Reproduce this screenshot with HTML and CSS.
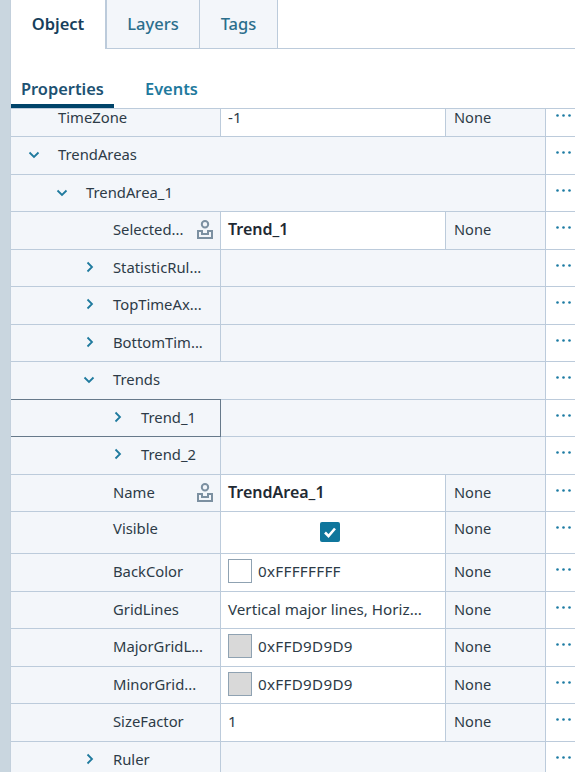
FILE: index.html
```html
<!DOCTYPE html>
<html lang="en">
<head>
    <meta charset="UTF-8">
    <title>Properties</title>
    <link rel="stylesheet" href="styles.css">
</head>
<body>
    <svg class="defs" width="0" height="0">
        <symbol id="dots" viewBox="0 0 15 3"><circle cx="1.500" cy="1.500" r="1.300"/><circle cx="7.500" cy="1.500" r="1.300"/><circle cx="13.500" cy="1.500" r="1.300"/></symbol>
        <symbol id="down" viewBox="0 0 12 8"><path d="M1.500 1.500 6 6l4.500-4.500" fill="none" stroke-width="1.800"/></symbol>
        <symbol id="right" viewBox="0 0 8 12"><path d="M1.500 1.500 6 6l-4.500 4.500" fill="none" stroke-width="1.800"/></symbol>
        <symbol id="person" viewBox="0 0 16 19"><circle cx="8" cy="4.200" r="3.200" fill="none" stroke-width="2"/><path d="M1 18v-7h4v3h6v-3h4v7z" fill="none" stroke-width="2"/></symbol>
    </svg>

    <div class="panel">
        <!-- Top tabs -->
        <div class="tabs">
            <div class="tab tab-active">Object</div>
            <div class="tab">Layers</div>
            <div class="tab">Tags</div>
        </div>
        <div class="subtabs">
            <div class="subtab subtab-active">Properties</div>
            <div class="subtab">Events</div>
        </div>

        <!-- Property grid -->
        <div class="grid">
            <div class="grid-inner">
                <div class="row">
                    <div class="name lvl-0"><span class="twist"></span><span class="label">TimeZone</span></div>
                    <div class="value">-1</div><div class="dyn">None</div><div class="more"><svg><use href="#dots"/></svg></div>
                </div>
                <div class="row row-group">
                    <div class="name lvl-0"><span class="twist"><svg class="chev-down"><use href="#down"/></svg></span><span class="label">TrendAreas</span></div>
                    <div class="more"><svg><use href="#dots"/></svg></div>
                </div>
                <div class="row row-group">
                    <div class="name lvl-1"><span class="twist"><svg class="chev-down"><use href="#down"/></svg></span><span class="label">TrendArea_1</span></div>
                    <div class="more"><svg><use href="#dots"/></svg></div>
                </div>
                <div class="row">
                    <div class="name lvl-2"><span class="twist"></span><span class="label label-short">Selected...</span><svg class="person"><use href="#person"/></svg></div>
                    <div class="value value-bold">Trend_1</div><div class="dyn">None</div><div class="more"><svg><use href="#dots"/></svg></div>
                </div>
                <div class="row row-empty">
                    <div class="name lvl-2"><span class="twist"><svg class="chev-right"><use href="#right"/></svg></span><span class="label">StatisticRul...</span></div>
                    <div class="blank"></div><div class="more"><svg><use href="#dots"/></svg></div>
                </div>
                <div class="row row-empty">
                    <div class="name lvl-2"><span class="twist"><svg class="chev-right"><use href="#right"/></svg></span><span class="label">TopTimeAx...</span></div>
                    <div class="blank"></div><div class="more"><svg><use href="#dots"/></svg></div>
                </div>
                <div class="row row-empty">
                    <div class="name lvl-2"><span class="twist"><svg class="chev-right"><use href="#right"/></svg></span><span class="label">BottomTim...</span></div>
                    <div class="blank"></div><div class="more"><svg><use href="#dots"/></svg></div>
                </div>
                <div class="row row-group">
                    <div class="name lvl-2"><span class="twist"><svg class="chev-down"><use href="#down"/></svg></span><span class="label">Trends</span></div>
                    <div class="more"><svg><use href="#dots"/></svg></div>
                </div>
                <div class="row row-empty">
                    <div class="name lvl-3 name-focus"><span class="twist"><svg class="chev-right"><use href="#right"/></svg></span><span class="label">Trend_1</span></div>
                    <div class="blank"></div><div class="more"><svg><use href="#dots"/></svg></div>
                </div>
                <div class="row row-empty">
                    <div class="name lvl-3"><span class="twist"><svg class="chev-right"><use href="#right"/></svg></span><span class="label">Trend_2</span></div>
                    <div class="blank"></div><div class="more"><svg><use href="#dots"/></svg></div>
                </div>
                <div class="row">
                    <div class="name lvl-2"><span class="twist"></span><span class="label label-short">Name</span><svg class="person"><use href="#person"/></svg></div>
                    <div class="value value-bold">TrendArea_1</div><div class="dyn">None</div><div class="more"><svg><use href="#dots"/></svg></div>
                </div>
                <div class="row row-tall">
                    <div class="name lvl-2"><span class="twist"></span><span class="label">Visible</span></div>
                    <div class="value value-center"><span class="check"><svg viewBox="0 0 20 20"><path d="M5 10.500 8.500 14 15 6.500" fill="none" stroke="#fff" stroke-width="2.600"/></svg></span></div>
                    <div class="dyn">None</div><div class="more"><svg><use href="#dots"/></svg></div>
                </div>
                <div class="row">
                    <div class="name lvl-2"><span class="twist"></span><span class="label">BackColor</span></div>
                    <div class="value"><span class="swatch swatch-white"></span><span class="hex">0xFFFFFFFF</span></div><div class="dyn">None</div><div class="more"><svg><use href="#dots"/></svg></div>
                </div>
                <div class="row">
                    <div class="name lvl-2"><span class="twist"></span><span class="label">GridLines</span></div>
                    <div class="value">Vertical major lines, Horiz...</div><div class="dyn">None</div><div class="more"><svg><use href="#dots"/></svg></div>
                </div>
                <div class="row">
                    <div class="name lvl-2"><span class="twist"></span><span class="label">MajorGridL...</span></div>
                    <div class="value"><span class="swatch swatch-grey"></span><span class="hex">0xFFD9D9D9</span></div><div class="dyn">None</div><div class="more"><svg><use href="#dots"/></svg></div>
                </div>
                <div class="row">
                    <div class="name lvl-2"><span class="twist"></span><span class="label">MinorGrid...</span></div>
                    <div class="value"><span class="swatch swatch-grey"></span><span class="hex">0xFFD9D9D9</span></div><div class="dyn">None</div><div class="more"><svg><use href="#dots"/></svg></div>
                </div>
                <div class="row">
                    <div class="name lvl-2"><span class="twist"></span><span class="label">SizeFactor</span></div>
                    <div class="value">1</div><div class="dyn">None</div><div class="more"><svg><use href="#dots"/></svg></div>
                </div>
                <div class="row row-empty">
                    <div class="name lvl-2"><span class="twist"><svg class="chev-right"><use href="#right"/></svg></span><span class="label">Ruler</span></div>
                    <div class="blank"></div><div class="more"><svg><use href="#dots"/></svg></div>
                </div>
            </div>
        </div>
    </div>
</body>
</html>
```

FILE: styles.css
```css
/* Page */
html, body {
    height: 100%;
}

body {
    margin: 0;
    background-color: white;
    font-family: 'Noto Sans', sans-serif;
    font-size: 14.6px;
    color: #2d3b47;
    overflow: hidden;
}

.defs {
    position: absolute;
}

.panel {
    height: 772px;
    margin-left: 10px;
    border-left: 1px solid #c3d0dc;
    box-shadow: -10px 0 0 #c9d6df;
    display: flex;
    flex-direction: column;
}

/* Top tabs */
.tabs {
    display: flex;
    height: 49px;
    border-bottom: 1px solid #bccbdb;
    box-sizing: border-box;
    flex-shrink: 0;
}

.tab {
    display: flex;
    align-items: center;
    justify-content: center;
    background-color: #f3f6fa;
    border-right: 1px solid #bccbdb;
    color: #2b6e8c;
    font-size: 16.5px;
    font-weight: 500;
    width: 78px;
    padding-bottom: 2px;
    box-sizing: border-box;
}

.tab:nth-child(2) {
    width: 93px;
}

.tab-active {
    background-color: white;
    color: #173f5c;
    font-weight: 600;
    width: 96px;
    border-right: 2px solid #bccbdb;
    margin-bottom: -1px;
}

/* Sub tabs */
.subtabs {
    display: flex;
    height: 59px;
    align-items: flex-end;
    flex-shrink: 0;
}

.subtab {
    height: 33px;
    padding: 0 10px;
    color: #1f7a9e;
    font-size: 16.4px;
    font-weight: 600;
    margin-left: 21px;
    line-height: 27px;
    box-sizing: border-box;
}

.subtab-active {
    width: 103px;
    margin-left: 0;
    color: #1d5272;
    border-bottom: 4px solid #00446a;
}

/* Property grid */
.grid {
    flex: 1;
    min-height: 0;
    overflow: hidden;
    border-top: 1px solid #bccbdb;
}

.grid-inner {
    margin-top: -9.5px;
}

.row {
    display: grid;
    grid-template-columns: 210px 225px 100px 1fr;
    height: 37.5px;
    box-sizing: border-box;
    border-bottom: 1px solid #bccbdb;
}

.row-tall {
    height: 42px;
}

.row-empty {
    grid-template-columns: 210px 325px 1fr;
}

.row-group {
    grid-template-columns: 535px 1fr;
}

.name {
    display: flex;
    align-items: center;
    background-color: #f3f6fa;
    border-right: 1px solid #bccbdb;
    min-width: 0;
    padding-bottom: 2px;
    font-size: 14.8px;
}

.name-focus {
    box-shadow: inset 0 1px 0 #66798a, inset 0 -1px 0 #66798a, inset -1px 0 0 #66798a;
    margin-top: -1px;
    margin-bottom: -1px;
    border-right: 0;
    padding-bottom: 2px;
    position: relative;
}

.lvl-0 { padding-left: 17px; }
.lvl-1 { padding-left: 45px; }
.lvl-2 { padding-left: 72px; }
.lvl-3 { padding-left: 100px; }

.twist {
    width: 30px;
    height: 14px;
    flex-shrink: 0;
    display: flex;
    align-items: center;
}

.chev-down {
    width: 12px;
    height: 8px;
    margin-top: 2px;
    stroke: #1f7a9e;
}

.chev-right {
    width: 8px;
    height: 12px;
    margin-left: 3px;
    stroke: #1f7a9e;
}

.label {
    white-space: nowrap;
}

.label-short {
    flex: 1;
}

.person {
    width: 16px;
    height: 19px;
    stroke: #7c90a1;
    margin-right: 7px;
    margin-top: 1px;
    flex-shrink: 0;
}

.value {
    display: flex;
    align-items: center;
    background-color: white;
    border-right: 1px solid #bccbdb;
    padding-left: 7px;
    padding-bottom: 2px;
    font-size: 15.200px;
    white-space: nowrap;
}

.value-bold {
    font-weight: 600;
    font-size: 16px;
    color: #1f2a33;
}

.value-center {
    justify-content: center;
    padding: 0 6px 1px 0;
}

.hex {
    letter-spacing: 0.3px;
}

.dyn {
    display: flex;
    align-items: center;
    background-color: #f3f6fa;
    border-right: 1px solid #bccbdb;
    padding-left: 8px;
    padding-bottom: 2px;
}

.row-tall .name,
.row-tall .dyn {
    align-items: flex-start;
    padding-top: 6px;
    padding-bottom: 0;
}

.row-tall .twist {
    height: 20px;
}

.blank {
    background-color: #f3f6fa;
    border-right: 1px solid #bccbdb;
}

.more {
    background-color: white;
    padding: 14px 0 0 10px;
}

.more svg {
    display: block;
    width: 15px;
    height: 3px;
    fill: #1c7ba3;
}

.check {
    display: block;
    width: 20px;
    height: 20px;
    border-radius: 2px;
    background-color: #0f769c;
}

.check svg {
    display: block;
}

.swatch {
    width: 22px;
    height: 22px;
    border: 1px solid #8fa2b2;
    margin-right: 6px;
    flex-shrink: 0;
}

.swatch-white {
    background-color: white;
}

.swatch-grey {
    background-color: #d9d9d9;
}
```
